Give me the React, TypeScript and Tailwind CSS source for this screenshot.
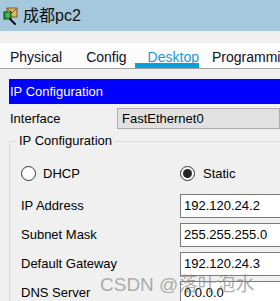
import React from "react";

const rows = [
  { label: "IP Address", value: "192.120.24.2" },
  { label: "Subnet Mask", value: "255.255.255.0" },
  { label: "Default Gateway", value: "192.120.24.3" },
  { label: "DNS Server", value: "0.0.0.0" },
];

function PcIcon() {
  return (
    <svg width="16" height="18" viewBox="0 0 16 18" className="shrink-0">
      <rect x="5" y="1" width="10" height="9" fill="#d9b86a" stroke="#7a5a20" strokeWidth="1" />
      <path d="M5 1 L10 6 L15 1" fill="none" stroke="#7a5a20" strokeWidth="1" />
      <rect x="2" y="5" width="7" height="7" fill="#1f8a2e" stroke="#0b4a14" strokeWidth="1" />
      <path d="M3 7 H8 M3 9 H8 M5 5 V12 M7 5 V12" stroke="#7fdc7a" strokeWidth="0.6" />
      <path d="M8 12 L13 17" stroke="#111" strokeWidth="2" strokeLinecap="round" />
    </svg>
  );
}

function Radio({ checked }: { checked?: boolean }) {
  return (
    <span className="w-[15px] h-[15px] rounded-full border border-[#333] bg-white flex items-center justify-center shrink-0">
      {checked && <span className="w-[9px] h-[9px] rounded-full bg-[#262626]" />}
    </span>
  );
}

export default function App() {
  return (
    <div className="relative w-[280px] h-[301px] overflow-hidden bg-[#f0f0f0] text-[13px] text-black" style={{ fontFamily: '"Liberation Sans", Arial, sans-serif' }}>
      <div className="h-[31px] bg-[#a5c8dd] flex items-center pl-[2px] gap-[5px]">
        <PcIcon />
        <span className="text-[16px] text-[#111]" style={{ fontFamily: '"Liberation Sans", "Noto Sans CJK SC", sans-serif' }}>成都pc2</span>
      </div>
      <div className="h-[12px]" />
      <div className="h-[26px] bg-[#fcfcfc] border-b border-[#a0a0a0] flex items-stretch text-[14px] text-[#101028] whitespace-nowrap">
        <span className="ml-[10px] pt-[4px]">Physical</span>
        <span className="ml-[24px] pt-[4px]">Config</span>
        <span className="ml-[8px] w-[72px] pt-[4px] pl-[13px] border-b-[5px] border-[#079fdc] text-[#1b9ad6]">Desktop</span>
        <span className="ml-[13px] pt-[4px]">Programming</span>
      </div>
      <div className="mt-[10px] ml-[9px] h-[25px] bg-[#0000ff] text-white flex items-center pl-[1px]">IP Configuration</div>
      <div className="mt-[4px] flex items-center">
        <span className="w-[117px] pl-[10px]">Interface</span>
        <div className="flex-1 h-[21px] bg-[#e1e1e1] border border-[#adadad] flex items-center pl-[4px]">FastEthernet0</div>
      </div>
      <fieldset className="mt-[4px] ml-[9px] w-[300px] border border-[#dcdcdc] pl-[11px] pb-[8px]">
        <legend className="ml-[-4px] px-[2px] leading-[16px]">IP Configuration</legend>
        <div className="mt-[15px] grid grid-cols-[159px_1fr] h-[15px]">
          <label className="flex items-center gap-[7px]"><Radio />DHCP</label>
          <label className="flex items-center gap-[8px]"><Radio checked />Static</label>
        </div>
        <div className="mt-[15px] flex flex-col gap-[5px]">
          {rows.map(r => (
            <div key={r.label} className="grid grid-cols-[159px_1fr] items-center h-[24px]">
              <span>{r.label}</span>
              <div className="h-[24px] bg-white border border-[#7a7a7a] flex items-center pl-[3px]">{r.value}</div>
            </div>
          ))}
        </div>
      </fieldset>
      <div className="absolute left-[100px] top-[271px] text-[19px] text-[#8a8a8a]/70 whitespace-nowrap pointer-events-none" style={{ fontFamily: '"Liberation Sans", "Noto Sans CJK SC", sans-serif' }}>CSDN @落叶泡水</div>
    </div>
  );
}
